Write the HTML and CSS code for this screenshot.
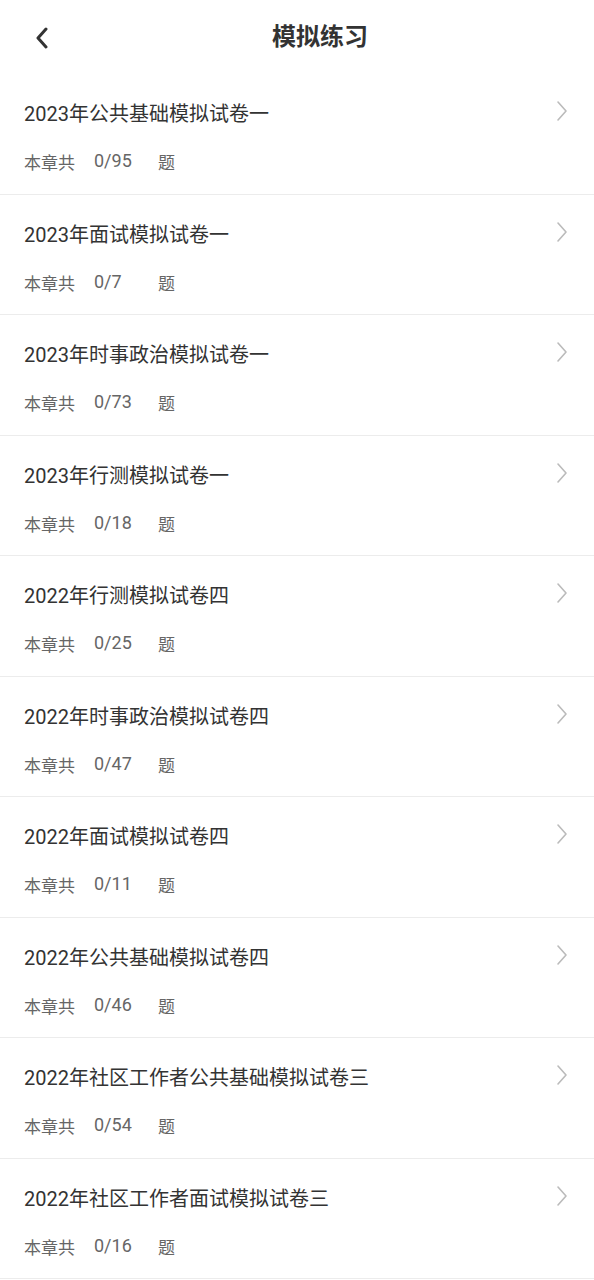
FILE: index.html
```html
<!DOCTYPE html>
<html lang="zh">
<head>
<meta charset="utf-8">
<link rel="stylesheet" href="styles.css">
</head>
<body>
<header class="bar">
  <div class="back">
    <svg width="16" height="22" viewBox="0 0 16 22"><path d="M12 2 L4 11 L12 20" fill="none" stroke="#333" stroke-width="3" stroke-linecap="round" stroke-linejoin="round"/></svg>
  </div>
  <h1 class="title">模拟练习</h1>
</header>
<ul class="list">
  <li class="item"><div class="info"><div class="name">2023年公共基础模拟试卷一</div><div class="meta"><span>本章共</span><span class="num">0/95</span><span>题</span></div></div><svg class="chev" width="12" height="22" viewBox="0 0 12 22"><path d="M2 2 L10 11 L2 20" fill="none" stroke="#bbb" stroke-width="1.6" stroke-linecap="round" stroke-linejoin="round"/></svg></li>
  <li class="item"><div class="info"><div class="name">2023年面试模拟试卷一</div><div class="meta"><span>本章共</span><span class="num">0/7</span><span>题</span></div></div><svg class="chev" width="12" height="22" viewBox="0 0 12 22"><path d="M2 2 L10 11 L2 20" fill="none" stroke="#bbb" stroke-width="1.6" stroke-linecap="round" stroke-linejoin="round"/></svg></li>
  <li class="item"><div class="info"><div class="name">2023年时事政治模拟试卷一</div><div class="meta"><span>本章共</span><span class="num">0/73</span><span>题</span></div></div><svg class="chev" width="12" height="22" viewBox="0 0 12 22"><path d="M2 2 L10 11 L2 20" fill="none" stroke="#bbb" stroke-width="1.6" stroke-linecap="round" stroke-linejoin="round"/></svg></li>
  <li class="item"><div class="info"><div class="name">2023年行测模拟试卷一</div><div class="meta"><span>本章共</span><span class="num">0/18</span><span>题</span></div></div><svg class="chev" width="12" height="22" viewBox="0 0 12 22"><path d="M2 2 L10 11 L2 20" fill="none" stroke="#bbb" stroke-width="1.6" stroke-linecap="round" stroke-linejoin="round"/></svg></li>
  <li class="item"><div class="info"><div class="name">2022年行测模拟试卷四</div><div class="meta"><span>本章共</span><span class="num">0/25</span><span>题</span></div></div><svg class="chev" width="12" height="22" viewBox="0 0 12 22"><path d="M2 2 L10 11 L2 20" fill="none" stroke="#bbb" stroke-width="1.6" stroke-linecap="round" stroke-linejoin="round"/></svg></li>
  <li class="item"><div class="info"><div class="name">2022年时事政治模拟试卷四</div><div class="meta"><span>本章共</span><span class="num">0/47</span><span>题</span></div></div><svg class="chev" width="12" height="22" viewBox="0 0 12 22"><path d="M2 2 L10 11 L2 20" fill="none" stroke="#bbb" stroke-width="1.6" stroke-linecap="round" stroke-linejoin="round"/></svg></li>
  <li class="item"><div class="info"><div class="name">2022年面试模拟试卷四</div><div class="meta"><span>本章共</span><span class="num">0/11</span><span>题</span></div></div><svg class="chev" width="12" height="22" viewBox="0 0 12 22"><path d="M2 2 L10 11 L2 20" fill="none" stroke="#bbb" stroke-width="1.6" stroke-linecap="round" stroke-linejoin="round"/></svg></li>
  <li class="item"><div class="info"><div class="name">2022年公共基础模拟试卷四</div><div class="meta"><span>本章共</span><span class="num">0/46</span><span>题</span></div></div><svg class="chev" width="12" height="22" viewBox="0 0 12 22"><path d="M2 2 L10 11 L2 20" fill="none" stroke="#bbb" stroke-width="1.6" stroke-linecap="round" stroke-linejoin="round"/></svg></li>
  <li class="item"><div class="info"><div class="name">2022年社区工作者公共基础模拟试卷三</div><div class="meta"><span>本章共</span><span class="num">0/54</span><span>题</span></div></div><svg class="chev" width="12" height="22" viewBox="0 0 12 22"><path d="M2 2 L10 11 L2 20" fill="none" stroke="#bbb" stroke-width="1.6" stroke-linecap="round" stroke-linejoin="round"/></svg></li>
  <li class="item"><div class="info"><div class="name">2022年社区工作者面试模拟试卷三</div><div class="meta"><span>本章共</span><span class="num">0/16</span><span>题</span></div></div><svg class="chev" width="12" height="22" viewBox="0 0 12 22"><path d="M2 2 L10 11 L2 20" fill="none" stroke="#bbb" stroke-width="1.6" stroke-linecap="round" stroke-linejoin="round"/></svg></li>
</ul>
</body>
</html>
```
FILE: styles.css
```css
* { box-sizing: border-box; }
html, body { margin: 0; padding: 0; background: #fff; }
body {
  width: 594px;
  font-family: Roboto, "Noto Sans CJK SC", sans-serif;
  color: #333;
}
.bar {
  height: 74px;
  display: flex;
  align-items: center;
}
.back {
  width: 46px;
  padding-left: 34px;
  box-sizing: content-box;
  display: flex;
  align-items: center;
  margin-top: 1px;
  flex: none;
}
.title {
  flex: 1;
  margin: 0;
  text-align: center;
  font-size: 24px;
  font-weight: 700;
  color: #333;
  padding-right: 34px;
  line-height: 30px;
}
.list {
  list-style: none;
  margin: 0;
  padding: 0;
}
.item {
  display: flex;
  align-items: flex-start;
  padding: 26px 26px 18.5px 24px;
  border-bottom: 1px solid #ececec;
}
.info { flex: 1; }
.name {
  font-size: 20px;
  line-height: 28px;
  color: #333;
}
.meta {
  margin-top: 23px;
  display: flex;
  align-items: center;
  font-size: 17px;
  line-height: 24px;
  color: #666;
}
.num {
  width: 64px;
  margin-left: 19px;
  font-size: 18px;
  margin-top: -4px;
  color: #666;
}
.chev {
  flex: none;
}
```
